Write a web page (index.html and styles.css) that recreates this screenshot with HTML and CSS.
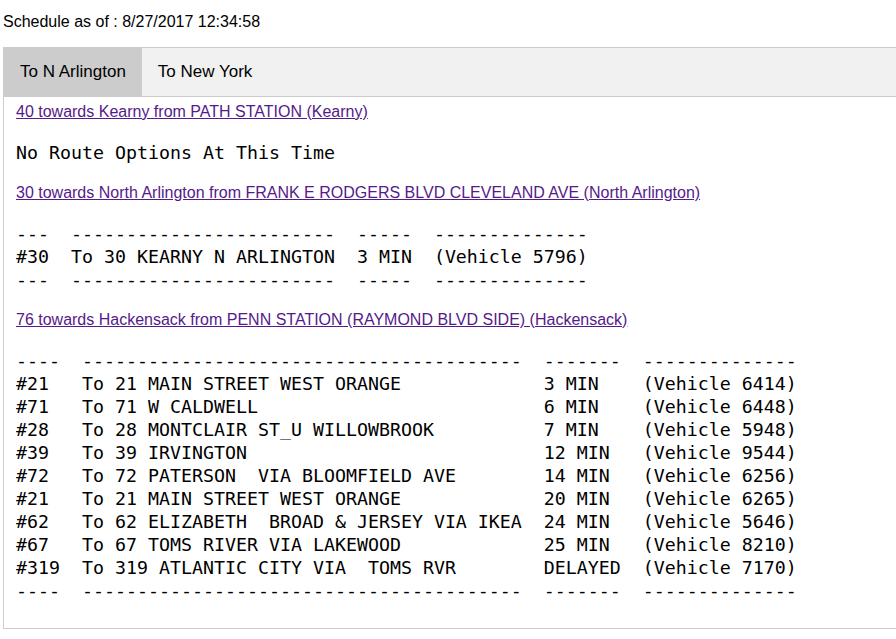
FILE: index.html
```html
<!DOCTYPE html>
<html>
<head>
<meta charset="utf-8">
<link rel="stylesheet" href="styles.css">
</head>
<body>
<div class="page">
<p class="stamp">Schedule as of : 8/27/2017 12:34:58</p>
<div class="tabs">
<div class="tab-bar"><button class="tab active">To N Arlington</button><button class="tab">To New York</button></div>
<div class="tab-content">
<a class="route" href="#">40 towards Kearny from PATH STATION (Kearny)</a>
<pre class="times">No Route Options At This Time</pre>
<a class="route" href="#">30 towards North Arlington from FRANK E RODGERS BLVD CLEVELAND AVE (North Arlington)</a>
<pre class="times">---  ------------------------  -----  --------------
#30  To 30 KEARNY N ARLINGTON  3 MIN  (Vehicle 5796)
---  ------------------------  -----  --------------</pre>
<a class="route" href="#">76 towards Hackensack from PENN STATION (RAYMOND BLVD SIDE) (Hackensack)</a>
<pre class="times">----  ----------------------------------------  -------  --------------
#21   To 21 MAIN STREET WEST ORANGE             3 MIN    (Vehicle 6414)
#71   To 71 W CALDWELL                          6 MIN    (Vehicle 6448)
#28   To 28 MONTCLAIR ST_U WILLOWBROOK          7 MIN    (Vehicle 5948)
#39   To 39 IRVINGTON                           12 MIN   (Vehicle 9544)
#72   To 72 PATERSON  VIA BLOOMFIELD AVE        14 MIN   (Vehicle 6256)
#21   To 21 MAIN STREET WEST ORANGE             20 MIN   (Vehicle 6265)
#62   To 62 ELIZABETH  BROAD &amp; JERSEY VIA IKEA  24 MIN   (Vehicle 5646)
#67   To 67 TOMS RIVER VIA LAKEWOOD             25 MIN   (Vehicle 8210)
#319  To 319 ATLANTIC CITY VIA  TOMS RVR        DELAYED  (Vehicle 7170)
----  ----------------------------------------  -------  --------------</pre>
</div>
</div>
</div>
</body>
</html>
```
FILE: styles.css
```css
html, body {
  margin: 0;
  padding: 0;
  background: #fff;
}

body {
  font-family: "Liberation Sans", Arial, sans-serif;
  font-size: 16px;
  color: #000;
}

.page {
  padding: 0 0 0 3px;
}

.stamp {
  margin: 13px 0 16px;
  line-height: 18px;
}

.tab-bar {
  display: flex;
  border: 1px solid #ccc;
  border-right: none;
  background: #f1f1f1;
}

.tab {
  margin: 0;
  border: none;
  outline: none;
  background: transparent;
  padding: 14px 16px;
  font-family: "Liberation Sans", Arial, sans-serif;
  font-size: 17px;
  line-height: 20px;
  color: #000;
}

.tab.active {
  background: #ccc;
}

.tab-content {
  border: 1px solid #ccc;
  border-top: none;
  border-right: none;
  padding: 6px 12px;
  line-height: 18px;
}

.route {
  color: #551a8b;
  text-decoration: underline;
}

.times {
  margin: 20px 0;
  font-family: "DejaVu Sans Mono", monospace;
  font-size: 18.27px;
  line-height: 23px;
  color: #000;
  overflow: hidden;
}
```
